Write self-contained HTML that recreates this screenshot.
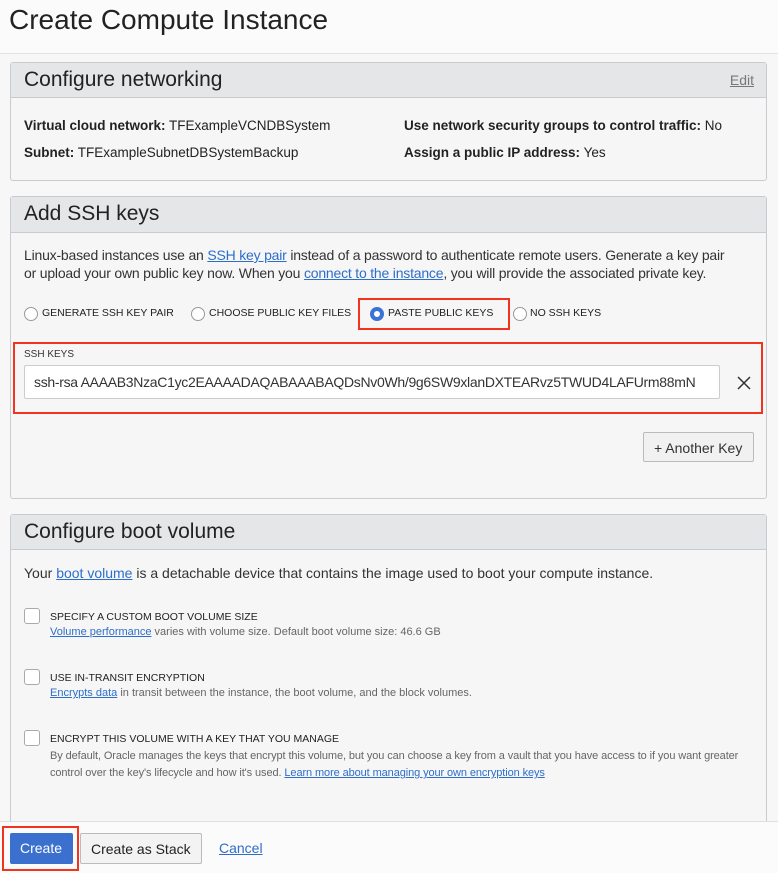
<!DOCTYPE html>
<html><head><style>
*{box-sizing:border-box;margin:0;padding:0}
body{width:778px;height:873px;overflow:hidden;background:#f7f7f7;font-family:"Liberation Sans",sans-serif;color:#222;position:relative}
.a{position:absolute;white-space:nowrap}
.top{position:absolute;left:0;top:0;width:778px;height:54px;background:#fbfbfb;border-bottom:1px solid #e2e2e2}
.panel{position:absolute;left:10px;width:757px;border:1px solid #c8cbcf;border-radius:3px;background:#f6f6f6}
.ph{height:35px;background:#e4e6e8;border-bottom:1px solid #c8cbcf;font-size:21px;padding:5px 0 0 13px;color:#222}
a,.lk{color:#2d6ecb;text-decoration:underline}
.s13{font-size:13.5px}
.radio{position:absolute;width:14px;height:14px;border:1px solid #999;border-radius:50%;background:#fff}
.cb{position:absolute;left:24px;width:16px;height:16px;border:1px solid #aaa;border-radius:3px;background:#fff}
.lab{font-size:10.5px;color:#222}
.desc{font-size:11px;color:#666}
.red{position:absolute;border:2px solid #f0341e}
</style></head><body>
<div class="top"></div>
<div class="a" style="left:9px;top:4px;font-size:28px;color:#222">Create Compute Instance</div>

<div class="panel" style="top:62px;height:119px">
<div class="ph">Configure networking<span class="a" style="right:12px;top:9px;font-size:14px;color:#777;text-decoration:underline">Edit</span></div>
</div>
<div class="a s13" style="left:24px;top:118px"><b>Virtual cloud network:</b> TFExampleVCNDBSystem</div>
<div class="a s13" style="left:24px;top:145px"><b>Subnet:</b> TFExampleSubnetDBSystemBackup</div>
<div class="a s13" style="left:404px;top:118px"><b>Use network security groups to control traffic:</b> No</div>
<div class="a s13" style="left:404px;top:145px"><b>Assign a public IP address:</b> Yes</div>

<div class="panel" style="top:196px;height:303px">
<div class="ph" style="height:36px">Add SSH keys</div>
</div>
<div class="a" style="left:24px;top:246px;font-size:14px;line-height:18px;color:#333;letter-spacing:-0.2px">Linux-based instances use an <span class="lk">SSH key pair</span> instead of a password to authenticate remote users. Generate a key pair<br>or upload your own public key now. When you <span class="lk">connect to the instance</span>, you will provide the associated private key.</div>
<div class="radio" style="left:24px;top:307px"></div><div class="a lab" style="left:42px;top:307px">GENERATE SSH KEY PAIR</div>
<div class="radio" style="left:191px;top:307px"></div><div class="a lab" style="left:209px;top:307px">CHOOSE PUBLIC KEY FILES</div>
<div class="radio" style="left:370px;top:307px;border:4px solid #3a72d6;background:#fff"></div><div class="a lab" style="left:388px;top:307px">PASTE PUBLIC KEYS</div>
<div class="radio" style="left:513px;top:307px"></div><div class="a lab" style="left:530px;top:307px">NO SSH KEYS</div>
<div class="red" style="left:358px;top:298px;width:152px;height:32px"></div>
<div class="a" style="left:24px;top:349px;font-size:10px;color:#333">SSH KEYS</div>
<div class="a" style="left:24px;top:365px;width:696px;height:34px;background:#fff;border:1px solid #ccc;border-radius:2px;overflow:hidden;font-size:14px;padding:8px 0 0 9px;color:#333;letter-spacing:-0.3px">ssh-rsa AAAAB3NzaC1yc2EAAAADAQABAAABAQDsNv0Wh/9g6SW9xlanDXTEARvz5TWUD4LAFUrm88mN</div>
<svg class="a" style="left:736px;top:375px" width="16" height="16"><path d="M2 2L14 14M14 2L2 14" stroke="#333" stroke-width="1.5"/></svg>
<div class="red" style="left:13px;top:342px;width:750px;height:72px"></div>
<div class="a" style="left:643px;top:432px;width:111px;height:30px;border:1px solid #bbb;border-radius:2px;background:#f1f1f1;font-size:14px;padding:7px 0 0 10px;color:#333">+ Another Key</div>

<div class="panel" style="top:514px;height:330px">
<div class="ph">Configure boot volume</div>
</div>
<div class="a" style="left:24px;top:565px;font-size:14px;color:#333">Your <span class="lk">boot volume</span> is a detachable device that contains the image used to boot your compute instance.</div>
<div class="cb" style="top:608px"></div>
<div class="a lab" style="left:50px;top:611px">SPECIFY A CUSTOM BOOT VOLUME SIZE</div>
<div class="a desc" style="left:50px;top:626px"><span class="lk">Volume performance</span> varies with volume size. Default boot volume size: 46.6 GB</div>
<div class="cb" style="top:669px"></div>
<div class="a lab" style="left:50px;top:672px">USE IN-TRANSIT ENCRYPTION</div>
<div class="a desc" style="left:50px;top:687px"><span class="lk">Encrypts data</span> in transit between the instance, the boot volume, and the block volumes.</div>
<div class="cb" style="top:730px"></div>
<div class="a lab" style="left:50px;top:733px">ENCRYPT THIS VOLUME WITH A KEY THAT YOU MANAGE</div>
<div class="a desc" style="left:50px;top:748px;line-height:17px;letter-spacing:-0.1px">By default, Oracle manages the keys that encrypt this volume, but you can choose a key from a vault that you have access to if you want greater<br>control over the key's lifecycle and how it's used. <span class="lk">Learn more about managing your own encryption keys</span></div>

<div class="a" style="left:0;top:821px;width:778px;height:52px;background:#fbfbfb;border-top:1px solid #e0e0e0"></div>
<div class="a" style="left:10px;top:833px;width:63px;height:31px;background:#3b70cf;border-radius:2px;color:#fff;font-size:14px;padding:7px 0 0 10px">Create</div>
<div class="red" style="left:2px;top:826px;width:77px;height:45px"></div>
<div class="a" style="left:80px;top:833px;width:122px;height:31px;background:#f3f3f3;border:1px solid #bbb;border-radius:2px;color:#222;font-size:14px;padding:7px 0 0 10px">Create as Stack</div>
<div class="a lk" style="left:219px;top:840px;font-size:14px">Cancel</div>
</body></html>
